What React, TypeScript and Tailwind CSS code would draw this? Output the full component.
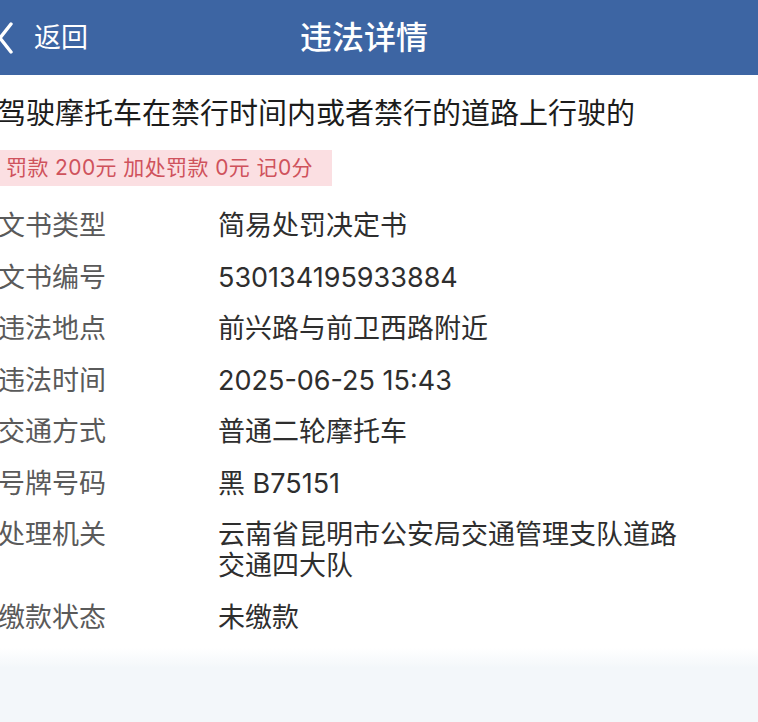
import React from 'react';

const rows: { label: string; value: string[] }[] = [
    { label: '文书类型', value: ['简易处罚决定书'] },
    { label: '文书编号', value: ['530134195933884'] },
    { label: '违法地点', value: ['前兴路与前卫西路附近'] },
    { label: '违法时间', value: ['2025-06-25 15:43'] },
    { label: '交通方式', value: ['普通二轮摩托车'] },
    { label: '号牌号码', value: ['黑 B75151'] },
    { label: '处理机关', value: ['云南省昆明市公安局交通管理支队道路', '交通四大队'] },
    { label: '缴款状态', value: ['未缴款'] },
];

export default function App() {
    return (
        <div
            className="w-[758px] h-[722px] overflow-hidden bg-[#f3f7fa] flex flex-col"
            style={{ fontFamily: 'Inter, "Noto Sans CJK SC", sans-serif' }}
        >
            <header className="h-[75px] shrink-0 bg-[#3d65a3] flex items-center text-white">
                <svg width="16" height="32" viewBox="0 0 16 32" className="-ml-[3px] shrink-0">
                    <path d="M14 2 L3 16 L14 30" fill="none" stroke="white" strokeWidth="3.4" strokeLinecap="round" strokeLinejoin="round" />
                </svg>
                <span className="ml-[21px] text-[27px] leading-none">返回</span>
                <h1 className="ml-[212px] text-[32px] font-medium leading-none">违法详情</h1>
            </header>

            <main className="bg-white h-[573px] shrink-0 pt-[20px]">
                <p className="text-[29px] leading-[38px] text-[#1c1c1c] -ml-[3px] whitespace-nowrap">
                    驾驶摩托车在禁行时间内或者禁行的道路上行驶的
                </p>
                <div className="mt-[17px] w-[332px] h-[36px] bg-[#fbdfe2] flex items-center pl-[6px] text-[21px] tracking-[0.4px] text-[#cf525c] whitespace-nowrap">
                    罚款 200元 加处罚款 0元 记0分
                </div>
                <div className="mt-[24px] flex flex-col gap-[20.5px]">
                    {rows.map((r) => (
                        <div key={r.label} className="flex text-[27px] leading-[31px]">
                            <div className="w-[218px] shrink-0 text-[#5a5a5a] -ml-[2px]">{r.label}</div>
                            <div className="text-[#2e2e2e] ml-[2px]">
                                {r.value.map((v) => (
                                    <div key={v}>{v}</div>
                                ))}
                            </div>
                        </div>
                    ))}
                </div>
            </main>
            <div className="h-[20px] shrink-0 bg-gradient-to-b from-white to-[#f3f7fa]" />
        </div>
    );
}
